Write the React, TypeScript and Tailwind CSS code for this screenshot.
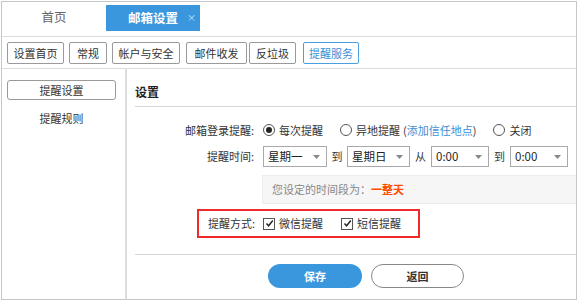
import React from "react";

const font = { fontFamily: '"Noto Sans CJK SC", "Noto Sans", sans-serif' };

function Caret() {
  return (
    <svg width="7" height="4" viewBox="0 0 7 4" className="shrink-0">
      <path d="M0 0 L7 0 L3.5 4 Z" fill="#888" />
    </svg>
  );
}

function Select({ w, label }: { w: string; label: string }) {
  return (
    <div className={`${w} h-[21px] border border-[#a9a9a9] bg-white flex items-center justify-between pl-[4px] pr-[6px] text-[11.5px] text-[#222]`}>
      <span>{label}</span>
      <Caret />
    </div>
  );
}

function Radio({ checked }: { checked?: boolean }) {
  return (
    <span className="w-[12px] h-[12px] rounded-full border border-[#555] flex items-center justify-center bg-white shrink-0">
      {checked && <span className="w-[6px] h-[6px] rounded-full bg-[#222]" />}
    </span>
  );
}

function Check() {
  return (
    <span className="w-[12px] h-[12px] border border-[#555] bg-white flex items-center justify-center shrink-0">
      <svg width="9" height="9" viewBox="0 0 9 9">
        <path d="M1.5 4.5 L3.6 6.8 L7.8 1.5" stroke="#222" strokeWidth="1.4" fill="none" />
      </svg>
    </span>
  );
}

export default function App() {
  return (
    <div className="w-[580px] h-[302px] bg-white overflow-hidden" style={font}>
      <div className="ml-[1px] mt-[1px] w-[576px] h-[299px] border border-[#c6c6c6] flex flex-col">
        {/* tab header */}
        <div className="h-[35px] border-b border-[#dcdcdc] flex items-start shrink-0">
          <div className="w-[104px] h-[31px] flex items-center justify-center text-[12.5px] text-[#666]">首页</div>
          <div className="mt-[3px] w-[94px] h-[26px] bg-[#3a97dd] flex items-center relative">
            <span className="w-full text-center text-[12.5px] font-bold text-white">邮箱设置</span>
            <span className="absolute right-[4px] top-[8px] text-[9px] text-[#cfe6f8] leading-none">×</span>
          </div>
        </div>
        {/* sub-buttons row */}
        <div className="h-[32px] border-b border-[#dcdcdc] flex items-start pt-[5px] pl-[5px] shrink-0 text-[11px] text-[#333]">
          <div className="w-[57px] h-[22px] border border-[#9a9a9a] rounded-[2px] flex items-center justify-center">设置首页</div>
          <div className="ml-[5px] w-[38px] h-[22px] border border-[#9a9a9a] rounded-[2px] flex items-center justify-center">常规</div>
          <div className="ml-[5px] w-[68px] h-[22px] border border-[#9a9a9a] rounded-[2px] flex items-center justify-center">帐户与安全</div>
          <div className="ml-[6px] w-[61px] h-[22px] border border-[#9a9a9a] rounded-[2px] flex items-center justify-center">邮件收发</div>
          <div className="ml-[2px] w-[47px] h-[22px] border border-[#9a9a9a] rounded-[2px] flex items-center justify-center">反垃圾</div>
          <div className="ml-[7px] w-[56px] h-[22px] border border-[#4a9fe0] rounded-[2px] flex items-center justify-center text-[#3a8fd6]">提醒服务</div>
        </div>
        {/* body */}
        <div className="flex flex-1 min-h-0">
          <div className="w-[123px] flex flex-col text-[11px] text-[#333] shrink-0">
            <div className="mt-[11px] ml-[5px] w-[109px] h-[20px] border border-[#9a9a9a] rounded-[3px] flex items-center justify-center">提醒设置</div>
            <div className="mt-[8px] ml-[5px] w-[109px] h-[20px] flex items-center justify-center">提醒规则</div>
          </div>
          <div className="w-[2px] bg-[#dedede] shrink-0" />
          <div className="flex-1 flex flex-col pl-[8px] text-[11px] text-[#333]">
            <div className="h-[37px] flex items-center pt-[8px] text-[12px] font-bold text-[#222]">设置</div>
            <div className="h-px bg-[#d6d6d6]" />
            {/* row 1 */}
            <div className="mt-[13px] h-[20px] flex items-center">
              <div className="w-[119px] text-right">邮箱登录提醒:</div>
              <div className="ml-[9px] flex items-center">
                <Radio checked />
                <span className="ml-[4px]">每次提醒</span>
                <span className="ml-[17px]"><Radio /></span>
                <span className="ml-[4px]">异地提醒</span>
                <span className="ml-[3px]">(</span>
                <span className="text-[#3a8fd6]">添加信任地点</span>
                <span>)</span>
                <span className="ml-[17px]"><Radio /></span>
                <span className="ml-[4px]">关闭</span>
              </div>
            </div>
            {/* row 2 */}
            <div className="mt-[6px] h-[21px] flex items-center">
              <div className="w-[119px] text-right">提醒时间:</div>
              <div className="ml-[9px] flex items-center">
                <Select w="w-[64px]" label="星期一" />
                <span className="w-[20px] text-center">到</span>
                <Select w="w-[63px]" label="星期日" />
                <span className="w-[21px] text-center">从</span>
                <Select w="w-[58px]" label="0:00" />
                <span className="w-[21px] text-center">到</span>
                <Select w="w-[58px]" label="0:00" />
              </div>
            </div>
            {/* row 3 */}
            <div className="mt-[8px] ml-[127px] h-[29px] bg-[#f6f6f6] border border-[#ececec] border-r-0 flex items-center pl-[9px]">
              <span className="text-[#888]">您设定的时间段为：</span>
              <span className="text-[#ff4a00] font-bold">一整天</span>
            </div>
            {/* row 4 */}
            <div className="mt-[5px] ml-[62px] w-[223px] h-[29px] border-2 border-[#ee2a2a] flex items-center">
              <div className="w-[56px] text-right">提醒方式:</div>
              <div className="ml-[8px] flex items-center">
                <Check />
                <span className="ml-[4px]">微信提醒</span>
                <span className="ml-[18px]"><Check /></span>
                <span className="ml-[4px]">短信提醒</span>
              </div>
            </div>
            <div className="mt-[16px] h-px bg-[#d6d6d6]" />
            <div className="mt-[9px] flex items-center ml-[133px]">
              <div className="w-[94px] h-[24px] rounded-full bg-[#3a97dd] text-white font-bold flex items-center justify-center">保存</div>
              <div className="ml-[9px] w-[93px] h-[24px] rounded-full border border-[#888] text-[#333] font-bold flex items-center justify-center">返回</div>
            </div>
          </div>
        </div>
      </div>
    </div>
  );
}
